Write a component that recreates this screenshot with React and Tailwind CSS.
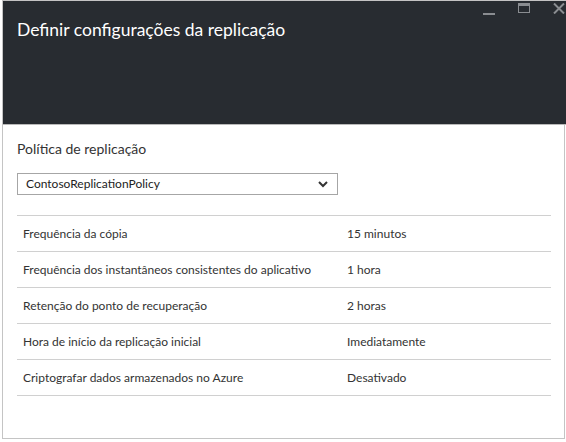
const rows = [
  ["Frequência da cópia", "15 minutos"],
  ["Frequência dos instantâneos consistentes do aplicativo", "1 hora"],
  ["Retenção do ponto de recuperação", "2 horas"],
  ["Hora de início da replicação inicial", "Imediatamente"],
  ["Criptografar dados armazenados no Azure", "Desativado"],
];

export default function App() {
  return (
    <div
      className="w-[566px] h-[442px] bg-white overflow-hidden"
      style={{ fontFamily: "Lato, 'Open Sans', sans-serif" }}
    >
      <div className="ml-[2px] w-[564px] h-[439px] border-l border-t border-[#c4c4c4] flex flex-col">
        {/* header */}
        <div className="relative h-[124px] bg-[#282c31] border-b border-[#b9b9b9] shrink-0">
          <h1 className="pt-[20px] pl-[14px] text-[17.5px] text-white leading-none">
            Definir configurações da replicação
          </h1>
          <div className="absolute top-[2px] left-[480px] flex items-start">
            <div className="mt-[10px] w-[12px] h-[2px] bg-[#8a8d91]" />
            <div className="ml-[23px] w-[12px] h-[10px] border border-[#8a8d91] border-t-[3px]" />
            <svg className="ml-[23px]" width="13" height="11" viewBox="0 0 13 11">
              <path d="M1 0.5 L11 10.5 M11 0.5 L1 10.5" stroke="#8a8d91" strokeWidth="2" />
            </svg>
          </div>
        </div>

        {/* body */}
        <div className="flex-1 border-r border-b border-[#c4c4c4] w-[562px] px-[14px]">
          <p className="mt-[17px] text-[14px] text-[#333] leading-none">Política de replicação</p>
          <div className="mt-[17px] w-[321px] h-[22px] border border-[#a6a6a6] flex items-center justify-between pl-[8px] pr-[9px]">
            <span className="text-[12px] text-[#222]">ContosoReplicationPolicy</span>
            <svg width="10" height="7" viewBox="0 0 10 7">
              <path d="M1 1 L5 5 L9 1" fill="none" stroke="#333" strokeWidth="2" />
            </svg>
          </div>
          <div className="mt-[20px] w-[534px] border-t border-[#d0d0d0]">
            {rows.map(([label, value]) => (
              <div
                key={label}
                className="h-[36px] border-b border-[#d0d0d0] flex items-center text-[12px] text-[#333]"
              >
                <span className="pl-[6px] w-[330px]">{label}</span>
                <span>{value}</span>
              </div>
            ))}
          </div>
        </div>
      </div>
    </div>
  );
}
